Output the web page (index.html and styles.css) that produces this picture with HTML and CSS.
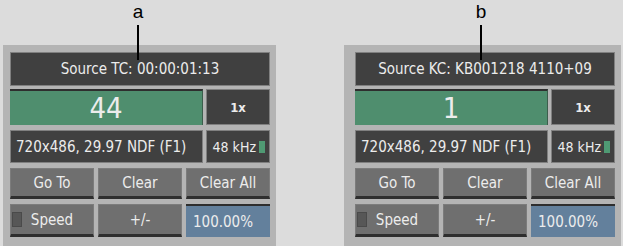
FILE: index.html
```html
<!DOCTYPE html>
<html>
<head>
    <meta charset="utf-8">
    <title>Source TC / KC</title>
    <link rel="stylesheet" href="styles.css">
</head>
<body>
    <div class="page">
        <!-- panel a: timecode -->
        <div class="figure fig-a">
            <div class="callout">a</div>
            <div class="panel">
                <div class="field title">Source TC: 00:00:01:13</div>
                <div class="row">
                    <div class="counter">44</div>
                    <div class="field small">1x</div>
                </div>
                <div class="row">
                    <div class="field info">720x486, 29.97 NDF (F1)</div>
                    <div class="field small khz">48 kHz<span class="led on"></span></div>
                </div>
                <div class="buttons">
                    <div class="btn">Go To</div>
                    <div class="btn">Clear</div>
                    <div class="btn">Clear All</div>
                </div>
                <div class="buttons">
                    <div class="btn speed"><span class="led"></span>Speed</div>
                    <div class="btn">+/-</div>
                    <div class="percent">100.00%</div>
                </div>
            </div>
        </div>

        <!-- panel b: keycode -->
        <div class="figure fig-b">
            <div class="callout">b</div>
            <div class="panel">
                <div class="field title">Source KC: KB001218 4110+09</div>
                <div class="row">
                    <div class="counter">1</div>
                    <div class="field small">1x</div>
                </div>
                <div class="row">
                    <div class="field info">720x486, 29.97 NDF (F1)</div>
                    <div class="field small khz">48 kHz<span class="led on"></span></div>
                </div>
                <div class="buttons">
                    <div class="btn">Go To</div>
                    <div class="btn">Clear</div>
                    <div class="btn">Clear All</div>
                </div>
                <div class="buttons">
                    <div class="btn speed"><span class="led"></span>Speed</div>
                    <div class="btn">+/-</div>
                    <div class="percent">100.00%</div>
                </div>
            </div>
        </div>
    </div>
</body>
</html>
```

FILE: styles.css
```css
body {
    margin: 0;
    background: #dcdcdc;
    font-family: "DejaVu Sans Condensed", "DejaVu Sans", sans-serif;
    color: #ececec;
}
.page {
    display: flex;
    height: 246px;
    overflow: hidden;
}
.figure {
    position: relative;
    padding-top: 45px;
}
.fig-a {
    margin-left: 3px;
    width: 273px;
}
.fig-b {
    margin-left: 68px;
    width: 279px;
}
.callout {
    position: absolute;
    top: 0;
    left: 126px;
    width: 18px;
    text-align: center;
    font-family: "Liberation Sans", Arial, sans-serif;
    font-size: 19px;
    line-height: 24px;
    color: #000;
}
.callout::after {
    content: "";
    position: absolute;
    top: 25px;
    left: 8px;
    width: 2px;
    height: 35px;
    background: #000;
}
.fig-b .callout {
    left: 128px;
}
.panel {
    background: #b4b4b4;
    height: 200px;
    padding: 7px 6px 0 7px;
    display: flex;
    flex-direction: column;
    width: 260px;
}
.fig-b .panel {
    padding-left: 11px;
}
.field {
    background: #404040;
    border: 1px solid #808080;
    box-sizing: border-box;
    display: flex;
    align-items: center;
    font-size: 15px;
}
.title {
    height: 34px;
    justify-content: center;
}
.row {
    display: flex;
    gap: 3px;
    margin-top: 3px;
}
.row + .row {
    margin-top: 5px;
}
.counter {
    width: 193px;
    height: 36px;
    box-sizing: border-box;
    background: #4f8e6e;
    border-top: 2px solid #2e2e2e;
    border-right: 1px solid #3c5e4c;
    display: flex;
    align-items: center;
    justify-content: center;
    font-size: 29px;
    font-family: "DejaVu Sans Condensed", sans-serif;
}
.row .small {
    width: 64px;
    height: 36px;
    justify-content: center;
    font-size: 13px;
    font-weight: bold;
}
.row + .row .small {
    height: 33px;
}
.info {
    width: 193px;
    height: 33px;
    padding-left: 5px;
}
.row .khz {
    font-size: 14px;
    font-weight: normal;
    justify-content: flex-end;
    padding-right: 4px;
    gap: 3px;
}
.led {
    display: inline-block;
    width: 6px;
    height: 12px;
    background: #4f9a73;
}
.buttons {
    display: grid;
    grid-template-columns: 1fr 1fr 1fr;
    gap: 4px;
    margin-top: 5px;
}
.btn {
    height: 31px;
    box-sizing: border-box;
    background: #6f6f6f;
    border: 1px solid #7c7c7c;
    border-bottom: 3px solid #2f2f2f;
    display: flex;
    align-items: center;
    justify-content: center;
    font-size: 15px;
}
.buttons + .buttons .btn {
    height: 33px;
}
.speed {
    position: relative;
}
.speed .led {
    position: absolute;
    left: 1px;
    top: 7px;
    width: 10px;
    height: 15px;
    background: #575757;
    border: 1px solid #4a4a4a;
    box-sizing: border-box;
}
.percent {
    height: 33px;
    box-sizing: border-box;
    background: #63809c;
    border-top: 2px solid #2e2e2e;
    display: flex;
    align-items: center;
    padding-left: 7px;
    font-size: 15px;
}
```
